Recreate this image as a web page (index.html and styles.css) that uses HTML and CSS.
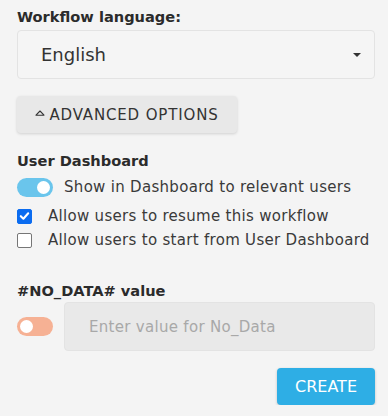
FILE: index.html
```html
<!DOCTYPE html>
<html>
<head>
<meta charset="utf-8">
<link rel="stylesheet" href="styles.css">
</head>
<body>
<div class="panel">
  <div class="label">Workflow language:</div>
  <div class="select">
    <span class="select-value">English</span>
    <span class="caret"></span>
  </div>
  <button class="adv-btn"><svg class="adv-icon" viewBox="0 0 10 6" width="10" height="6"><path d="M1 5.2 L5 1 L9 5.2 Z" fill="none" stroke="#333" stroke-width="1.1" stroke-linejoin="round"/></svg><span class="adv-text">ADVANCED OPTIONS</span></button>

  <div class="label section">User Dashboard</div>
  <div class="toggle-row">
    <span class="toggle on"><span class="knob"></span></span>
    <span class="row-text">Show in Dashboard to relevant users</span>
  </div>
  <label class="check-row">
    <span class="box checked">
      <svg viewBox="0 0 14 14" width="14" height="14"><path d="M3 7.2 L5.8 10 L11 4" fill="none" stroke="#fff" stroke-width="2.2" stroke-linecap="round" stroke-linejoin="round"/></svg>
    </span>
    <span class="row-text">Allow users to resume this workflow</span>
  </label>
  <label class="check-row">
    <span class="box"></span>
    <span class="row-text">Allow users to start from User Dashboard</span>
  </label>

  <div class="label nodata">#NO_DATA# value</div>
  <div class="nodata-row">
    <span class="toggle off"><span class="knob"></span></span>
    <div class="input">Enter value for No_Data</div>
  </div>

  <div class="actions">
    <button class="create">CREATE</button>
  </div>
</div>
</body>
</html>
```

FILE: styles.css
```css
html, body {
  margin: 0;
  padding: 0;
  background: #f4f4f4;
}
body {
  font-family: "DejaVu Sans", "Open Sans", sans-serif;
  color: #333;
}
.panel {
  padding: 7px 13px 0 17px;
  display: flex;
  flex-direction: column;
}
.label {
  font-weight: 700;
  font-size: 14.6px;
  line-height: 20px;
  color: #2b2b2b;
}
.select {
  margin-top: 3px;
  height: 47px;
  border: 1px solid #e3e3e3;
  border-radius: 4px;
  background: #f5f5f5;
  display: flex;
  align-items: center;
  justify-content: space-between;
  padding: 0 13px 0 23px;
}
.select-value {
  font-size: 18px;
  color: #333;
}
.caret {
  width: 0;
  height: 0;
  border-left: 4px solid transparent;
  border-right: 4px solid transparent;
  border-top: 4px solid #333;
}
.adv-btn {
  margin-top: 17px;
  align-self: flex-start;
  width: 220px;
  height: 37px;
  border: none;
  border-radius: 4px;
  background: #e8e8e8;
  box-shadow: 0 1px 3px rgba(0,0,0,0.15);
  font-family: inherit;
  color: #333;
  display: flex;
  align-items: center;
  justify-content: center;
  gap: 4px;
  padding: 0;
}
.adv-text {
  font-size: 15px;
  letter-spacing: 0.85px;
  white-space: nowrap;
}
.adv-icon {
  position: relative;
  top: -2px;
  flex-shrink: 0;
}
.section {
  margin-top: 18px;
}
.toggle-row {
  display: flex;
  align-items: center;
  margin-top: 4px;
  height: 24px;
}
.toggle {
  width: 36px;
  height: 19px;
  border-radius: 10px;
  display: flex;
  align-items: center;
  padding: 0 3px;
  box-sizing: border-box;
  flex-shrink: 0;
}
.toggle.on {
  background: #6ac5ec;
  justify-content: flex-end;
}
.toggle.off {
  background: #f6b194;
  justify-content: flex-start;
}
.knob {
  width: 13px;
  height: 13px;
  border-radius: 50%;
  background: #fff;
}
.toggle-row .row-text {
  margin-left: 11px;
}
.row-text {
  font-size: 15px;
  letter-spacing: 0.3px;
  color: #3a3a3a;
}
.check-row {
  display: flex;
  align-items: center;
  height: 24px;
  margin-top: 5px;
}
.check-row + .check-row {
  margin-top: 0;
}
.box {
  width: 13px;
  height: 13px;
  border: 1px solid #767676;
  border-radius: 2px;
  background: #fff;
  flex-shrink: 0;
  margin-right: 16px;
  display: flex;
  align-items: center;
  justify-content: center;
}
.box.checked {
  background: #0b6cf0;
  border-color: #0b6cf0;
}
.nodata {
  margin-top: 29px;
}
.nodata-row {
  display: flex;
  align-items: center;
  margin-top: 1px;
  gap: 11px;
}
.input {
  flex: 1;
  height: 49px;
  border-radius: 4px;
  background: #e9e9e9;
  border: 1px solid #e3e3e3;
  box-sizing: border-box;
  display: flex;
  align-items: center;
  padding-left: 24px;
  font-size: 15px;
  letter-spacing: 0.3px;
  color: #a8a8a8;
}
.actions {
  display: flex;
  justify-content: flex-end;
  margin-top: 17px;
}
.create {
  width: 98px;
  height: 37px;
  border: none;
  border-radius: 4px;
  background: #2eaee5;
  color: #fff;
  font-family: inherit;
  font-size: 16px;
  box-shadow: 0 1px 3px rgba(0,0,0,0.2);
  padding: 0;
}
```
